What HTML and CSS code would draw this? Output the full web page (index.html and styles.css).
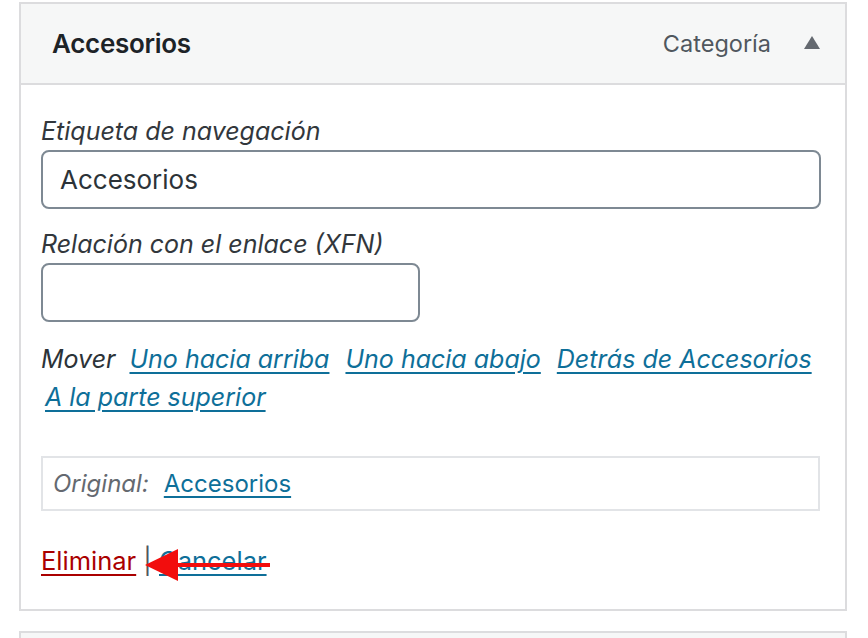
FILE: index.html
```html
<!DOCTYPE html>
<html lang="es">
<head>
<meta charset="utf-8">
<title>Elemento de menú</title>
<link rel="stylesheet" href="styles.css">
</head>
<body>
<div class="menu-item">
	<div class="item-bar">
		<span class="item-title">Accesorios</span>
		<span class="item-controls">
			<span class="item-type">Categoría</span>
			<span class="item-toggle"></span>
		</span>
	</div>
	<div class="item-settings">
		<label class="field">
			<span class="field-label">Etiqueta de navegación</span>
			<input type="text" class="text-input wide" value="Accesorios">
		</label>
		<label class="field">
			<span class="field-label">Relación con el enlace (XFN)</span>
			<input type="text" class="text-input narrow" value="">
		</label>
		<div class="move">
			<span class="move-label">Mover</span>
			<a href="#">Uno hacia arriba</a>
			<a href="#">Uno hacia abajo</a>
			<a href="#">Detrás de Accesorios</a>
			<a href="#" class="to-top">A la parte superior</a>
		</div>
		<div class="original">
			<span class="original-label">Original:</span>
			<a href="#">Accesorios</a>
		</div>
		<div class="actions">
			<a href="#" class="delete">Eliminar</a>
			<span class="sep">|</span>
			<a href="#" class="cancel">Cancelar</a>
			<svg class="arrow" width="130" height="34" viewBox="0 0 130 34">
				<line x1="20" y1="17" x2="125" y2="17" stroke="#f20d0d" stroke-width="4"/>
				<polygon points="0,17 33,1 33,33" fill="#f20d0d"/>
			</svg>
		</div>
	</div>
</div>
<div class="menu-item next">
	<div class="item-bar"></div>
</div>
</body>
</html>
```

FILE: styles.css
```css
body {
	margin:0;
	padding:0;
	background:#ffffff;
	font-family:Inter, "Liberation Sans", sans-serif;
	color:#2c3338;}
.menu-item {
	width:824px;
	margin:2px 0 0 19px;
	border:2px solid #dcdcde;
	background:#ffffff;}
.item-bar {
	display:flex;
	align-items:center;
	justify-content:space-between;
	height:79px;
	padding:0 25px 0 31px;
	background:#f6f7f7;
	border-bottom:2px solid #dcdcde;}
.item-title {
	font-size:26px;
	font-weight:600;
	color:#1d2327;
	letter-spacing:-0.3px;}
.item-controls {
	display:flex;
	align-items:center;
	gap:33px;}
.item-type {
	font-size:23.5px;
	color:#50575e;}
.item-toggle {
	width:0;
	height:0;
	border-left:8px solid transparent;
	border-right:8px solid transparent;
	border-bottom:13px solid #646970;
	margin-bottom:3px;}
.item-settings {
	padding:31px 24px 32px 20px;}
.field {
	display:block;
	margin-bottom:20px;}
.field-label {
	display:block;
	font-size:25px;
	font-style:italic;
	line-height:30px;
	margin-bottom:4px;
	color:#32373c;}
.text-input {
	display:block;
	box-sizing:border-box;
	height:59px;
	padding:0 17px;
	border:2px solid #7e8993;
	border-radius:8px;
	font-family:Inter, "Liberation Sans", sans-serif;
	font-size:26px;
	color:#2c3338;
	background:#ffffff;}
.wide {width:780px;}
.narrow {width:379px;}
.move {
	display:flex;
	flex-wrap:wrap;
	column-gap:16px;
	width:780px;
	margin-top:-2px;
	font-size:25px;
	font-style:italic;
	line-height:38px;
	white-space:nowrap;}
.move-label {margin-right:-2px;}
.move .to-top {margin-left:4px;}
a {
	color:#0e6f99;
	text-decoration:underline;
	text-underline-offset:4px;}
.original {
	box-sizing:border-box;
	width:779px;
	height:55px;
	margin-top:40px;
	padding:0 10px;
	display:flex;
	align-items:center;
	gap:15px;
	border:2px solid #e2e4e7;
	font-size:24px;}
.original-label {
	font-style:italic;
	color:#646970;}
.actions {
	position:relative;
	margin-top:34px;
	font-size:25.5px;
	line-height:32px;}
.actions .delete {color:#a00;}
.actions .sep {color:#50575e;}
.actions .cancel {color:#0e6f99;}
.arrow {
	position:absolute;
	left:104px;
	top:3px;}
.menu-item.next {margin-top:20px;}
.next .item-bar {height:30px;}
```
